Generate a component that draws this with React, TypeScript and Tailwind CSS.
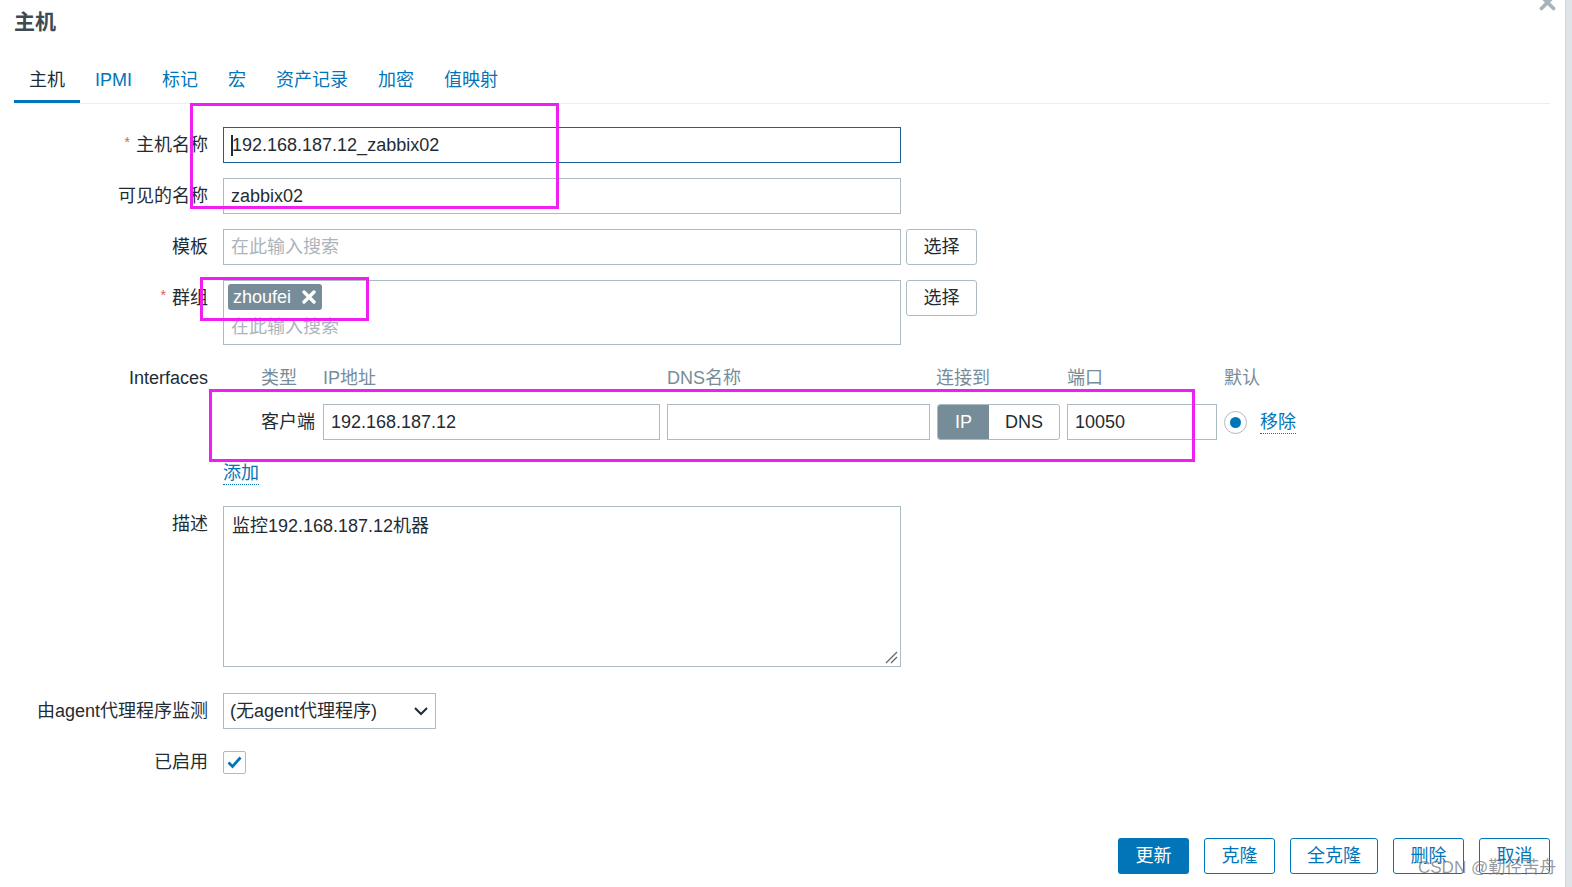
import React from "react";

const INPUT = "h-[36px] border border-[#acbbc2] bg-white flex items-center pl-[7px] text-[18px] text-[#1f2c33]";

function Label({ children, required }: { children?: React.ReactNode; required?: boolean }) {
  return (
    <div className="w-[194px] h-[36px] shrink-0 flex items-center justify-end whitespace-nowrap text-[18px] text-[#1f2c33]">
      {required && <span className="text-[#e45959] text-[14px] mr-[6px] -mt-[5px]">*</span>}
      {children}
    </div>
  );
}

function Row({ label, required, className = "", children }: { label?: React.ReactNode; required?: boolean; className?: string; children?: React.ReactNode }) {
  return (
    <div className={`flex ${className}`}>
      <Label required={required}>{label}</Label>
      <div className="ml-[15px] flex-1 min-w-0">{children}</div>
    </div>
  );
}

function SelectBtn() {
  return (
    <div className="ml-[5px] w-[71px] h-[36px] border border-[#acbbc2] rounded-[3px] bg-white flex items-center justify-center text-[18px] text-[#1f2c33]">
      选择
    </div>
  );
}

function XIcon({ size, color, width }: { size: number; color: string; width: number }) {
  return (
    <svg width={size} height={size} viewBox="0 0 14 14">
      <path d="M2 2 L12 12 M12 2 L2 12" stroke={color} strokeWidth={width} strokeLinecap="round" />
    </svg>
  );
}

export default function App() {
  const tabs = ["主机", "IPMI", "标记", "宏", "资产记录", "加密", "值映射"];
  return (
    <div className="w-[1572px] h-[887px] overflow-hidden flex bg-white font-['Liberation_Sans','Noto_Sans_CJK_SC',Arial,sans-serif]">
      <div className="relative flex-1 pl-[14px] pr-[15px]">
        {/* close */}
        <div className="absolute left-[1539px] top-[-6px]">
          <XIcon size={17} color="#a7b3ba" width={3} />
        </div>

        {/* title */}
        <div className="h-[44px] flex items-center text-[21px] font-bold text-[#3e4a53]">主机</div>

        {/* tabs */}
        <div className="mt-[17px] flex border-b border-[#ebeef0]">
          {tabs.map((t, i) => (
            <div
              key={t}
              className={`h-[42px] px-[15px] flex items-center text-[18px] border-b-[3px] ${
                i === 0 ? "border-[#0275b8] text-[#1f2c33]" : "border-transparent text-[#0275b8]"
              }`}
            >
              {t}
            </div>
          ))}
        </div>

        {/* form */}
        <div className="mt-[23px]">
          <Row label="主机名称" required>
            <div className="w-[678px] h-[36px] border border-[#1a5f96] bg-white flex items-center pl-[7px] text-[18px] text-[#1f2c33]">
              <span className="w-[2px] h-[21px] bg-[#1f2c33] -mr-[1px]" />
              192.168.187.12_zabbix02
            </div>
          </Row>

          <Row label="可见的名称" className="mt-[15px]">
            <div className={`${INPUT} w-[678px]`}>zabbix02</div>
          </Row>

          <Row label="模板" className="mt-[15px]">
            <div className="flex">
              <div className={`${INPUT} w-[678px] text-[#acb5bb]`}>在此输入搜索</div>
              <SelectBtn />
            </div>
          </Row>

          <Row label="群组" required className="mt-[15px]">
            <div className="flex items-start">
              <div className="w-[678px] h-[65px] border border-[#acbbc2] bg-white pl-[4px] pt-[3px]">
                <div className="inline-flex items-center h-[26px] pl-[5px] pr-[6px] rounded-[3px] bg-[#768d99] text-white text-[18px]">
                  zhoufei
                  <span className="ml-[11px] flex items-center">
                    <XIcon size={14} color="#ffffff" width={3.4} />
                  </span>
                </div>
                <div className="h-[34px] flex items-center pl-[3px] text-[18px] text-[#acb5bb]">在此输入搜索</div>
              </div>
              <SelectBtn />
            </div>
          </Row>

          {/* interfaces header */}
          <div className="flex mt-[18px]">
            <div className="w-[194px] h-[30px] shrink-0 flex items-center justify-end text-[18px] text-[#1f2c33]">Interfaces</div>
            <div className="ml-[15px] grid grid-cols-[93px_337px_263px_123px_150px_auto] gap-x-[7px] h-[30px] items-center text-[18px] text-[#768d99]">
              <div className="pl-[38px]">类型</div>
              <div>IP地址</div>
              <div>DNS名称</div>
              <div className="-ml-[1px]">连接到</div>
              <div>端口</div>
              <div>默认</div>
            </div>
          </div>

          {/* interface row */}
          <div className="flex mt-[11px]">
            <div className="w-[194px] shrink-0" />
            <div className="ml-[15px] grid grid-cols-[93px_337px_263px_123px_150px_auto] gap-x-[7px] h-[36px] items-center text-[18px] text-[#1f2c33]">
              <div className="pl-[38px] whitespace-nowrap">客户端</div>
              <div className={INPUT}>192.168.187.12</div>
              <div className={INPUT}></div>
              <div className="h-[36px] flex border border-[#acbbc2] rounded-[3px] overflow-hidden">
                <div className="w-[51px] bg-[#768d99] text-white flex items-center justify-center">IP</div>
                <div className="flex-1 flex items-center justify-center">DNS</div>
              </div>
              <div className={INPUT}>10050</div>
              <div className="flex items-center">
                <div className="w-[23px] h-[23px] rounded-full border border-[#acbbc2] bg-white flex items-center justify-center">
                  <div className="w-[11px] h-[11px] rounded-full bg-[#0275b8]" />
                </div>
                <span className="ml-[13px] text-[#0275b8] border-b border-dotted border-[#0275b8] leading-[22px]">移除</span>
              </div>
            </div>
          </div>

          {/* add */}
          <div className="flex mt-[19px]">
            <div className="w-[194px] shrink-0" />
            <div className="ml-[15px] h-[28px] flex items-center">
              <span className="text-[18px] text-[#0275b8] border-b border-dotted border-[#0275b8] leading-[22px]">添加</span>
            </div>
          </div>

          <Row label="描述" className="mt-[19px]">
            <div className="relative w-[678px] h-[161px] border border-[#acbbc2] bg-white px-[8px] pt-[6px] text-[18px] text-[#1f2c33]">
              监控192.168.187.12机器
              <svg className="absolute right-[2px] bottom-[2px]" width="13" height="13" viewBox="0 0 13 13">
                <path d="M1 12 L12 1 M6 12 L12 6" stroke="#666" strokeWidth="1.3" />
              </svg>
            </div>
          </Row>

          <Row label="由agent代理程序监测" className="mt-[26px]">
            <div className="w-[213px] h-[36px] border border-[#acbbc2] bg-white flex items-center justify-between pl-[6px] pr-[6px] text-[18px] text-[#1f2c33]">
              (无agent代理程序)
              <svg width="16" height="16" viewBox="0 0 16 16">
                <path d="M2 5 L8 11 L14 5" fill="none" stroke="#1f2c33" strokeWidth="2" />
              </svg>
            </div>
          </Row>

          <Row label="已启用" className="mt-[15px]">
            <div className="h-[36px] flex items-center">
              <div className="w-[23px] h-[23px] border border-[#acbbc2] rounded-[2px] bg-white flex items-center justify-center">
                <svg width="17" height="17" viewBox="0 0 17 17">
                  <path d="M2.5 8.5 L6.5 12.5 L14.5 3.5" fill="none" stroke="#0275b8" strokeWidth="2.8" />
                </svg>
              </div>
            </div>
          </Row>
        </div>

        {/* footer */}
        <div className="mt-[58px] flex justify-end gap-[15px] text-[18px]">
          <div className="w-[71px] h-[36px] rounded-[3px] bg-[#0275b8] text-white flex items-center justify-center">更新</div>
          <div className="w-[71px] h-[36px] rounded-[3px] border border-[#0275b8] text-[#0275b8] flex items-center justify-center">克隆</div>
          <div className="w-[88px] h-[36px] rounded-[3px] border border-[#0275b8] text-[#0275b8] flex items-center justify-center">全克隆</div>
          <div className="w-[71px] h-[36px] rounded-[3px] border border-[#0275b8] text-[#0275b8] flex items-center justify-center">删除</div>
          <div className="w-[71px] h-[36px] rounded-[3px] border border-[#0275b8] text-[#0275b8] flex items-center justify-center">取消</div>
        </div>

        {/* annotation boxes */}
        <div className="absolute left-[190px] top-[103px] w-[369px] h-[106px] border-[3px] border-[#f01ef0]" />
        <div className="absolute left-[200px] top-[277px] w-[169px] h-[44px] border-[3px] border-[#f01ef0]" />
        <div className="absolute left-[209px] top-[389px] w-[986px] h-[73px] border-[3px] border-[#f01ef0]" />

        {/* watermark */}
        <div className="absolute left-[1418px] top-[857px] text-[17px] leading-[22px] text-[rgba(115,120,125,0.75)] whitespace-nowrap">
          CSDN @勤径苦舟
        </div>
      </div>

      {/* right background strip */}
      <div className="w-[7px] h-full bg-[#dfe4e8] border-l border-[#cfd6db]" />
    </div>
  );
}
